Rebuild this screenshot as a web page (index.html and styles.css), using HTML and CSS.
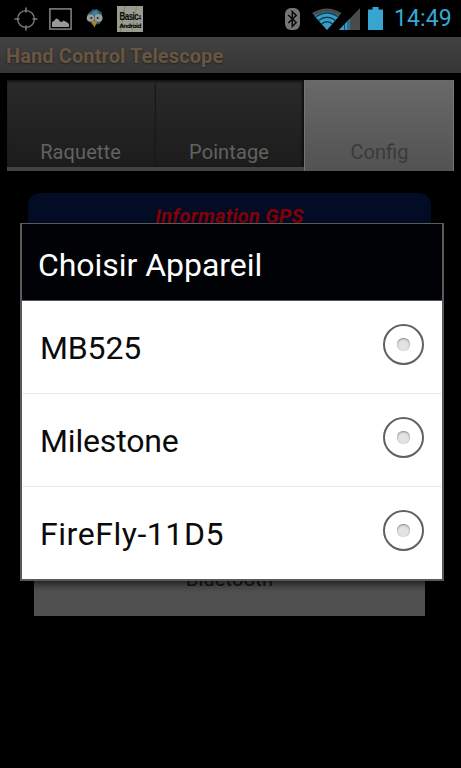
FILE: index.html
```html
<!DOCTYPE html>
<html lang="fr">
<head>
<meta charset="utf-8">
<title>Hand Control Telescope</title>
<link rel="stylesheet" href="styles.css">
</head>
<body>
<div class="screen">
  <header class="status">
    <svg class="icon gps" width="24" height="24" viewBox="0 0 24 24" fill="none" stroke="#7c7c7c"><circle cx="12" cy="12" r="8.400" stroke-width="1.4"/><path d="M12 .5v5M12 18.500v5M.5 12h5M18.500 12h5" stroke-width="1.6"/></svg>
    <svg class="icon photo" width="23" height="22" viewBox="0 0 23 22"><rect x=".9" y=".9" width="21.2" height="20.2" fill="none" stroke="#7c7c7c" stroke-width="1.6"/><path d="M3 19v-5l2-1 2-2.500 2 .5 2 2.500 2 .5 1.500-1.500 3 1.500 2.500 2V19z" fill="#999"/></svg>
    <svg class="icon bird" width="20" height="22" viewBox="0 0 20 22"><path d="M2.500 6L6 3 8 1l1.500 1 2-1 5 3 1 7-3 5-7 1-4-5z" fill="#2a566c"/><path d="M6 5l5-3 3 3-4 3z" fill="#467e98"/><circle cx="5.500" cy="10" r="3.800" fill="#9a9c94"/><circle cx="13.500" cy="10" r="4" fill="#9a9c94"/><circle cx="6.300" cy="10" r="1" fill="#222"/><circle cx="12.700" cy="10" r="1" fill="#222"/><path d="M6.500 14l3-1.500 2.500 1.500-2.500 5.500z" fill="#a8842a"/></svg>
    <div class="icon basic"><span class="name">Basic<small>4</small></span><span class="android">Android</span></div>
    <svg class="icon bt" width="15" height="22" viewBox="0 0 15 22"><rect width="15" height="22" rx="6" fill="#757575"/><path d="M3.200 7l8 7.500-3.900 4V3.500l3.900 4-8 7.500" fill="none" stroke="#080808" stroke-width="1.500"/></svg>
    <svg class="icon signal" width="48" height="24" viewBox="0 0 48 24"><path d="M0 6Q15-3 29.500 6L15 23z" fill="#484c4e"/><path d="M2.500 9Q15 1 27 9L15 23z" fill="#359fc9"/><path d="M3.500 10Q15 2 26.500 10M6.500 13.500Q15 7 23.500 13.500M9.500 17Q15 12.500 20.500 17" fill="none" stroke="#123e50" stroke-width="1.500"/><path d="M27 23L48 1v22z" fill="#4b4b4b"/><path d="M27 23l10.500-11V23z" fill="#359fc9"/><path d="M32.500 17v6M36 13v10" stroke="#17495c"/></svg>
    <svg class="icon battery" width="15" height="23" viewBox="0 0 15 23"><path d="M4.500 0h6v2.500H15V23H0V2.500h4.500z" fill="#38a5d0"/></svg>
    <time class="clock">14:49</time>
  </header>
  <h1 class="appbar">Hand Control Telescope</h1>
  <nav class="tabs">
    <div class="tab">Raquette</div>
    <div class="tab second">Pointage</div>
    <div class="tab active">Config</div>
  </nav>
  <main class="content">
    <section class="gps-panel">Information GPS</section>
    <div class="bluetooth">Bluetooth</div>
  </main>
  <div class="dialog" role="dialog">
    <h2 class="dialog-title">Choisir Appareil</h2>
    <div class="row"><span>MB525</span><i class="radio"></i></div>
    <div class="row"><span>Milestone</span><i class="radio"></i></div>
    <div class="row"><span class="wide">FireFly-11D5</span><i class="radio"></i></div>
  </div>
</div>
</body>
</html>
```
FILE: styles.css
```css
* { box-sizing: border-box; }
body { margin: 0; background: #000; font-family: Roboto, sans-serif; }
.screen { position: relative; width: 461px; height: 768px; overflow: hidden; background: #000; }
.status { height: 37px; display: flex; align-items: center; padding-left: 14px; }
.icon { flex: none; display: block; }
.photo { margin-left: 11px; }
.bird { margin-left: 13px; }
.basic { width: 26px; height: 26px; margin: 1px 0 0 12px; background: linear-gradient(100deg, #9a9c94 22%, #7a8a58 26%, #9a9c94 31%, #9a9c94 60%, #84915f 64%, #9a9c94 68%); color: #080808; display: flex; flex-direction: column; justify-content: flex-end; align-items: center; font: bold 8px/11px "Liberation Sans Narrow", "Liberation Sans", sans-serif; letter-spacing: -.5px; white-space: nowrap; padding-bottom: 3px; }
.name { transform: scaleY(1.45); }
.basic small { font-size: 5px; }
.android { font: 700 6px/6px "DejaVu Sans", sans-serif; letter-spacing: -.7px; }
.bt { margin-left: 142px; }
.signal { margin-left: 12px; }
.battery { margin-left: 8px; }
.clock { margin-left: 11px; font-size: 23px; line-height: 36px; letter-spacing: .1px; color: #36a9d6; }
.appbar { margin: 0; height: 36px; padding-left: 6px; font-size: 20px; line-height: 38px; font-weight: 700; color: #695640; letter-spacing: .1px; background: linear-gradient(#424242, #363636); text-shadow: 0 1px 2px #222; }
.tabs { display: grid; grid-template-columns: 148px 149px 150px; margin: 7px 0 0 7px; height: 91px; width: 447px; }
.tab { display: flex; align-items: flex-end; justify-content: center; padding: 0 1px 2px 0; font-size: 20px; line-height: 26px; letter-spacing: .1px; color: #626262; background: linear-gradient(#2a2a2a, #1c1c1c); border-bottom: 4px solid #434343; box-shadow: inset 0 2px 2px #171717; }
.second { box-shadow: inset 1px 0 #191919, inset -2px 0 2px #101010, inset 0 2px 2px #171717; }
.active { color: #3a3a3a; background: linear-gradient(#696969, #525252); border-bottom: 0; padding: 0 0 6px 1px; letter-spacing: 0; box-shadow: inset 1px 0 #747474, inset -1px 0 #777; }
.content { padding: 22px 36px 0 28px; display: flex; flex-direction: column; }
.gps-panel { width: 403px; height: 340px; border-radius: 12px; background: #020c25; color: #850007; text-align: center; font-size: 20px; line-height: 46px; font-weight: 700; font-style: italic; letter-spacing: .25px; }
.bluetooth { width: 391px; height: 76px; margin: 7px 0 0 6px; background: #505050; color: #141414; text-align: center; font-size: 20px; line-height: 79px; letter-spacing: .2px; }
.dialog { position: absolute; left: 20px; top: 223px; width: 424px; height: 358px; border: 2px solid #5a5a5a; border-top-width: 1px; background: #fff; box-shadow: 0 3px 8px #000a; }
.dialog-title { margin: 0; height: 77px; padding: 3px 0 0 16px; background: #010205; color: #fff; font-size: 32px; line-height: 76px; font-weight: 400; letter-spacing: -.04px; border-bottom: 1px solid #555; }
.row { height: 93px; padding: 1px 18px 0; display: flex; align-items: center; justify-content: space-between; font-size: 32px; letter-spacing: -.15px; color: #0b0b0b; border-bottom: 1px solid #ebebeb; }
.row:last-child { border-bottom-color: transparent; }
.wide { letter-spacing: .55px; }
.radio { width: 41px; height: 41px; margin-top: -6px; border: 2px solid #606060; border-radius: 50%; display: flex; align-items: center; justify-content: center; }
.radio::after { content: ""; width: 13px; height: 13px; border-radius: 6px; background: #e2e2e2; box-shadow: inset 0 1px 2px #888; }
```
